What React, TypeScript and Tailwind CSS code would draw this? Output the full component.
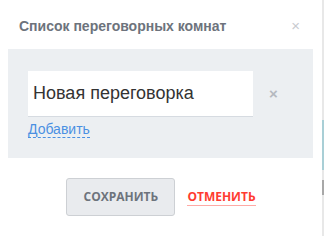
import React from "react";

export default function App() {
  return (
    <div className="flex w-[324px] h-[236px] bg-white" style={{ fontFamily: '"Liberation Sans", Arial, sans-serif' }}>
      <div className="w-[322px] flex flex-col">
        <div className="flex items-center justify-between h-[49px] pl-[19px] pr-[22px] pt-[3px]">
          <span className="text-[14px] font-bold text-[#6d737c]">Список переговорных комнат</span>
          <span className="text-[#c8cbd0] text-[15px]">×</span>
        </div>
        <div className="mx-[8px] w-[305px] h-[109px] bg-[#eceff2] pl-[20px] pt-[22px]">
          <div className="flex items-center">
            <div className="w-[225px] h-[46px] bg-white border-b border-[#d6dbe1] flex items-center pl-[5px]">
              <span className="text-[18px] text-[#333]">Новая переговорка</span>
            </div>
            <span className="ml-[16px] text-[#b5b9bf] text-[15px] font-bold">×</span>
          </div>
          <span className="inline-block text-[14px] text-[#4a90e2] border-b border-dashed border-[#4a90e2] leading-[16px] mt-[3px]">Добавить</span>
        </div>
        <div className="flex items-center justify-center gap-[12px] mt-[20px]" style={{ fontFamily: '"Open Sans", sans-serif' }}>
          <button className="w-[109px] h-[38px] bg-[#e9ebee] border border-[#cdd0d4] rounded-[3px] text-[12px] font-bold text-[#6d737c]">СОХРАНИТЬ</button>
          <span className="text-[12px] font-bold text-[#ff3b30] border-b border-[#ffaaa5] leading-[16px]">ОТМЕНИТЬ</span>
        </div>
      </div>
      <div className="w-[2px] flex flex-col">
        <div className="h-[120px] bg-[#e8e8e8]" />
        <div className="h-[50px] bg-[#a9cfd6]" />
        <div className="h-[10px] bg-[#e8e8e8]" />
        <div className="h-[15px] bg-[#a8a8a8]" />
        <div className="flex-1 bg-[#e8e8e8]" />
      </div>
    </div>
  );
}
